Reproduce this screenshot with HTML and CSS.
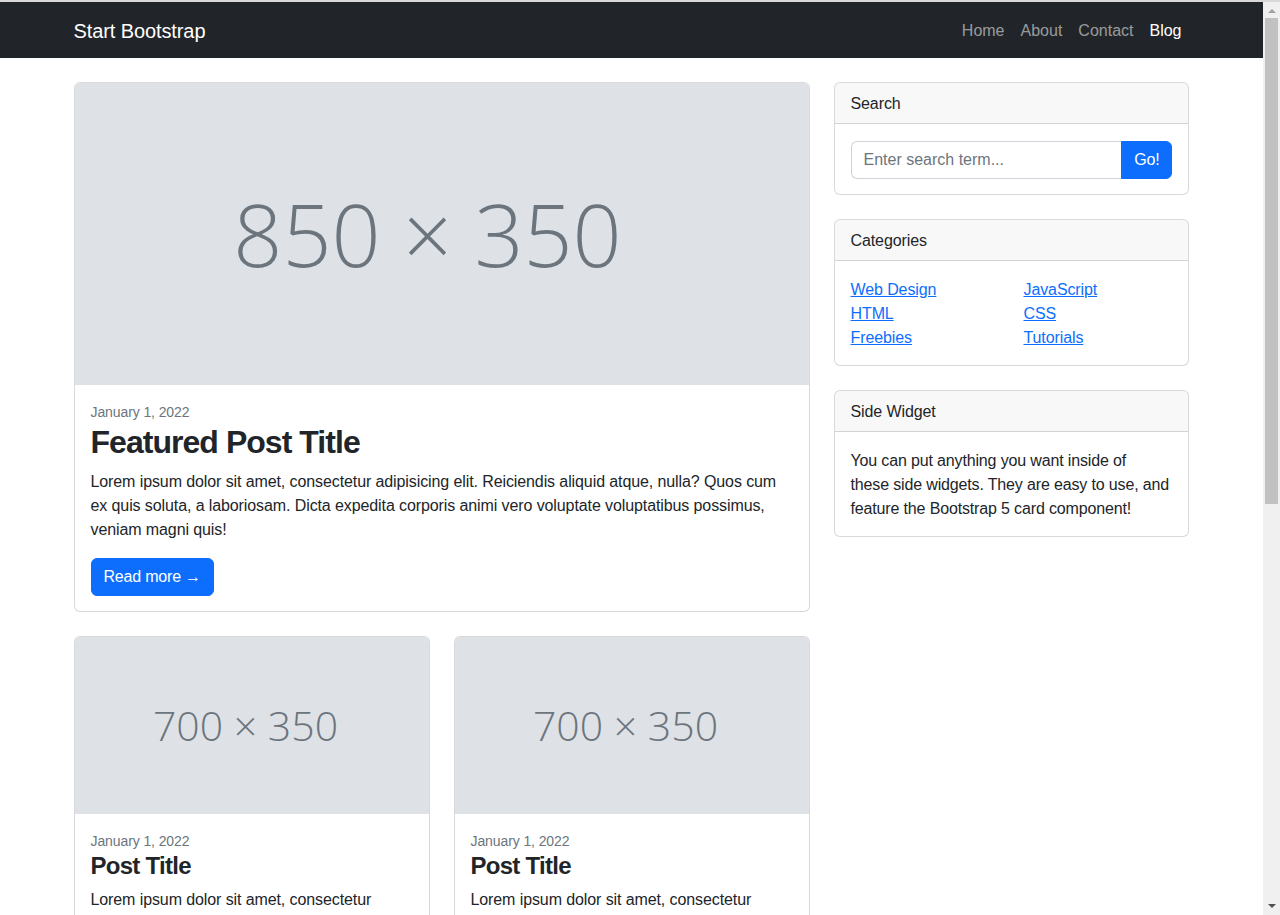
FILE: index.html
```html
<!DOCTYPE html>
<html lang="en">
<head>
<meta charset="utf-8">
<title>Blog Home - Start Bootstrap Template</title>
<link rel="stylesheet" href="styles.css">
</head>
<body>
<div class="frame-top"></div>
<div class="viewport">
  <div class="page">
    <nav class="navbar">
      <div class="container nav-inner">
        <a class="brand" href="#!">Start Bootstrap</a>
        <ul class="nav">
          <li><a class="nav-link" href="#!">Home</a></li>
          <li><a class="nav-link" href="#!">About</a></li>
          <li><a class="nav-link" href="#!">Contact</a></li>
          <li><a class="nav-link active" href="#!">Blog</a></li>
        </ul>
      </div>
    </nav>

    <div class="container main">
      <div class="row">
        <div class="col-main">
          <div class="card">
            <a href="#!" class="ph ph-lg">850 × 350</a>
            <div class="card-body">
              <div class="date">January 1, 2022</div>
              <h2 class="card-title title-lg">Featured Post Title</h2>
              <p class="card-text">Lorem ipsum dolor sit amet, consectetur adipisicing elit. Reiciendis aliquid atque, nulla? Quos cum ex quis soluta, a laboriosam. Dicta expedita corporis animi vero voluptate voluptatibus possimus, veniam magni quis!</p>
              <a class="btn" href="#!">Read more →</a>
            </div>
          </div>

          <div class="row">
            <div class="col-half">
              <div class="card">
                <a href="#!" class="ph ph-sm">700 × 350</a>
                <div class="card-body">
                  <div class="date">January 1, 2022</div>
                  <h2 class="card-title title-sm">Post Title</h2>
                  <p class="card-text">Lorem ipsum dolor sit amet, consectetur adipisicing elit. Reiciendis aliquid atque, nulla.</p>
                  <a class="btn" href="#!">Read more →</a>
                </div>
              </div>
            </div>
            <div class="col-half">
              <div class="card">
                <a href="#!" class="ph ph-sm">700 × 350</a>
                <div class="card-body">
                  <div class="date">January 1, 2022</div>
                  <h2 class="card-title title-sm">Post Title</h2>
                  <p class="card-text">Lorem ipsum dolor sit amet, consectetur adipisicing elit. Reiciendis aliquid atque, nulla.</p>
                  <a class="btn" href="#!">Read more →</a>
                </div>
              </div>
            </div>
          </div>
        </div>

        <div class="col-side">
          <div class="card">
            <div class="card-header">Search</div>
            <div class="card-body">
              <div class="input-group">
                <input class="form-control" type="text" placeholder="Enter search term..." aria-label="Enter search term...">
                <button class="btn btn-go" type="button">Go!</button>
              </div>
            </div>
          </div>

          <div class="card">
            <div class="card-header">Categories</div>
            <div class="card-body">
              <div class="cat-row">
                <ul class="cat-list">
                  <li><a href="#!">Web Design</a></li>
                  <li><a href="#!">HTML</a></li>
                  <li><a href="#!">Freebies</a></li>
                </ul>
                <ul class="cat-list">
                  <li><a href="#!">JavaScript</a></li>
                  <li><a href="#!">CSS</a></li>
                  <li><a href="#!">Tutorials</a></li>
                </ul>
              </div>
            </div>
          </div>

          <div class="card">
            <div class="card-header">Side Widget</div>
            <div class="card-body widget-text">You can put anything you want inside of<br>these side widgets. They are easy to use, and feature the Bootstrap 5 card component!</div>
          </div>
        </div>
      </div>
    </div>
  </div>

  <div class="scrollbar">
    <div class="sb-btn sb-btn-up"><span class="arrow-up"></span></div>
    <div class="sb-thumb"></div>
    <div class="sb-track"></div>
    <div class="sb-btn sb-btn-down"><span class="arrow-down"></span></div>
  </div>
</div>
</body>
</html>
```

FILE: styles.css
```css
*, *::before, *::after { box-sizing: border-box; }

html, body {
  margin: 0;
  height: 915px;
  overflow: hidden;
}

body {
  font-family: "Liberation Sans", Arial, sans-serif;
  font-size: 16px;
  line-height: 1.5;
  color: #212529;
  background: #fff;
  letter-spacing: -0.1px;
}

.frame-top {
  height: 2px;
  background: #d9d9d9;
}

.viewport {
  display: flex;
  height: 913px;
}

.page {
  flex: 1;
  min-width: 0;
  overflow: hidden;
}

/* Fake browser scrollbar */
.scrollbar {
  width: 17px;
  flex: 0 0 17px;
  background: #f0f0f0;
  display: flex;
  flex-direction: column;
  align-items: center;
}
.sb-btn {
  height: 16px;
  width: 17px;
  display: flex;
  justify-content: center;
}
.sb-btn-up { align-items: flex-start; padding-top: 7px; }
.sb-btn-down { align-items: flex-start; padding-top: 0; height: 11px; }
.arrow-up {
  width: 0; height: 0;
  border-left: 4px solid transparent;
  border-right: 4px solid transparent;
  border-bottom: 4px solid #a3a3a3;
}
.arrow-down {
  width: 0; height: 0;
  border-left: 4px solid transparent;
  border-right: 4px solid transparent;
  border-top: 4px solid #505050;
}
.sb-thumb {
  width: 13px;
  height: 486px;
  background: #c1c1c1;
}
.sb-track { flex: 1; }

/* Layout */
.container {
  width: 100%;
  max-width: 1140px;
  padding: 0 12px;
  margin: 0 auto;
}

.navbar {
  background: #212529;
  padding: 8px 0;
}
.nav-inner {
  display: flex;
  align-items: center;
  justify-content: space-between;
}
.brand {
  color: #fff;
  font-size: 20px;
  line-height: 30px;
  padding: 6px 0 4px;
  text-decoration: none;
  letter-spacing: -0.1px;
}
.nav {
  list-style: none;
  margin: 0;
  padding: 0;
  display: flex;
}
.nav-link {
  display: block;
  padding: 9px 8px 7px;
  color: rgba(255, 255, 255, 0.55);
  text-decoration: none;
  letter-spacing: 0;
}
.nav-link.active { color: #fff; }

.main { margin-top: 24px; }

.row {
  display: flex;
  margin: 0 -12px;
}
.col-main { flex: 0 0 66.6667%; width: 66.6667%; padding: 0 12px; }
.col-side { flex: 0 0 33.3333%; width: 33.3333%; padding: 0 12px; }
.col-half { flex: 0 0 50%; width: 50%; padding: 0 12px; }

/* Cards */
.card {
  background: #fff;
  border: 1px solid rgba(0, 0, 0, 0.15);
  border-radius: 6px;
  margin-bottom: 24px;
  display: flex;
  flex-direction: column;
}
.card-header {
  padding: 9px 16px 7px;
  background: rgba(33, 37, 41, 0.03);
  border-bottom: 1px solid rgba(0, 0, 0, 0.15);
  border-radius: 5px 5px 0 0;
}
.card-body { padding: 17px 16px 15px; }
.widget-text { letter-spacing: -0.15px; }

.ph {
  display: flex;
  align-items: center;
  justify-content: center;
  background: #dee2e6;
  color: #6c757d;
  font-family: "Open Sans", "Noto Sans", sans-serif;
  font-weight: 300;
  line-height: 1;
  letter-spacing: 0;
  text-decoration: none;
  border-radius: 5px 5px 0 0;
}
.ph-lg { aspect-ratio: 850 / 350; font-size: 86px; padding-right: 28px; }
.ph-sm { aspect-ratio: 700 / 350; font-size: 41px; padding-right: 12px; }

.date {
  font-size: 14px;
  line-height: 21px;
  color: #6c757d;
}
.card-title {
  margin: 0 0 8px;
  font-weight: 700;
  line-height: 1.2;
  letter-spacing: -0.03em;
}
.title-lg { font-size: 32px; }
.title-sm { font-size: 24px; }

.card-text { margin: 0 0 16px; }

.btn {
  display: inline-block;
  padding: 6px 12px;
  font-family: inherit;
  font-size: 16px;
  line-height: 24px;
  color: #fff;
  background: #0d6efd;
  border: 1px solid #0d6efd;
  border-radius: 6px;
  text-decoration: none;
  letter-spacing: -0.2px;
}

.input-group { display: flex; }
.form-control {
  flex: 1;
  min-width: 0;
  padding: 6px 12px;
  font-family: inherit;
  font-size: 16px;
  line-height: 24px;
  color: #212529;
  border: 1px solid #ced4da;
  border-right: 0;
  border-radius: 6px 0 0 6px;
  outline: none;
}
.form-control::placeholder { color: #6c757d; }
.btn-go {
  border-radius: 0 6px 6px 0;
  cursor: pointer;
}

.cat-row {
  display: flex;
  margin: 0 -12px;
}
.cat-list {
  flex: 0 0 50%;
  list-style: none;
  margin: 0;
  padding: 0 12px;
}
.cat-list a { color: #0d6efd; text-decoration: underline; }
```
